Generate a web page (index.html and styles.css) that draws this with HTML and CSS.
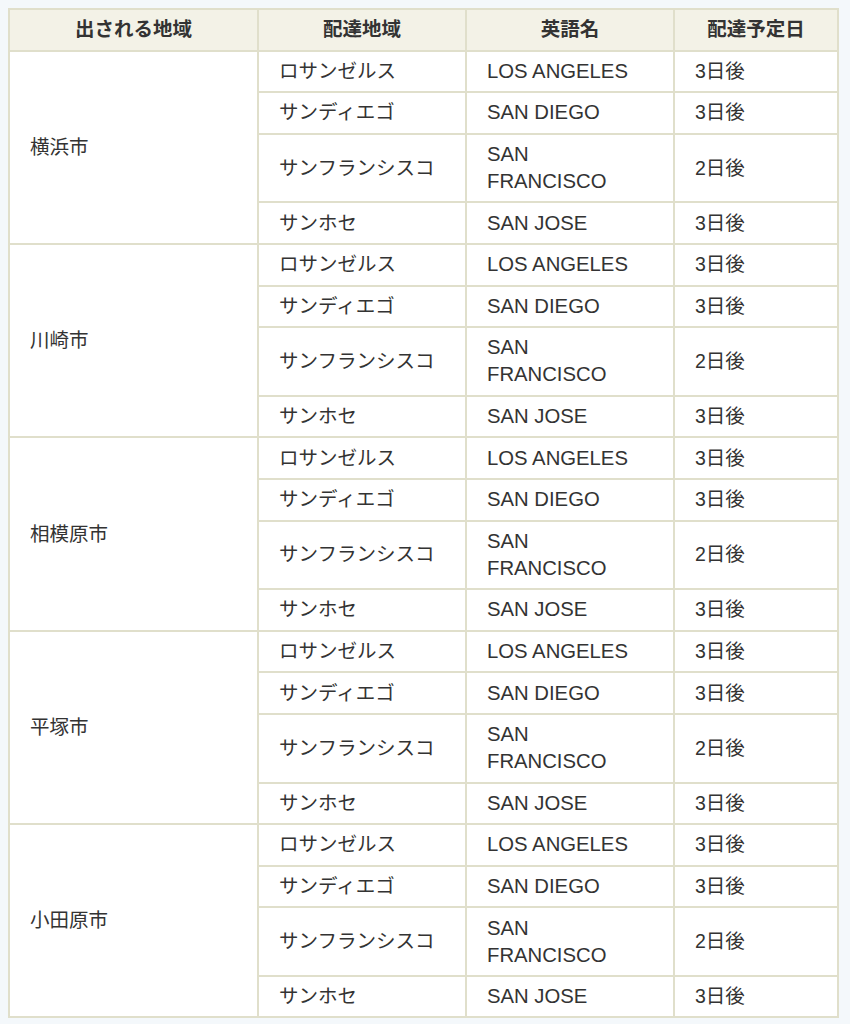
FILE: index.html
```html
<!DOCTYPE html>
<html lang="ja">
<head>
<meta charset="utf-8">
<link rel="stylesheet" href="styles.css">
</head>
<body>
<table class="delivery">
  <thead>
    <tr><th class="c1">出される地域</th><th class="c2">配達地域</th><th class="c3">英語名</th><th class="c4">配達予定日</th></tr>
  </thead>
  <tbody>
    <tr><td rowspan="4">横浜市</td><td>ロサンゼルス</td><td class="en">LOS ANGELES</td><td>3日後</td></tr>
    <tr><td>サンディエゴ</td><td class="en">SAN DIEGO</td><td>3日後</td></tr>
    <tr><td>サンフランシスコ</td><td class="en">SAN<br>FRANCISCO</td><td>2日後</td></tr>
    <tr><td>サンホセ</td><td class="en">SAN JOSE</td><td>3日後</td></tr>

    <tr><td rowspan="4">川崎市</td><td>ロサンゼルス</td><td class="en">LOS ANGELES</td><td>3日後</td></tr>
    <tr><td>サンディエゴ</td><td class="en">SAN DIEGO</td><td>3日後</td></tr>
    <tr><td>サンフランシスコ</td><td class="en">SAN<br>FRANCISCO</td><td>2日後</td></tr>
    <tr><td>サンホセ</td><td class="en">SAN JOSE</td><td>3日後</td></tr>

    <tr><td rowspan="4">相模原市</td><td>ロサンゼルス</td><td class="en">LOS ANGELES</td><td>3日後</td></tr>
    <tr><td>サンディエゴ</td><td class="en">SAN DIEGO</td><td>3日後</td></tr>
    <tr><td>サンフランシスコ</td><td class="en">SAN<br>FRANCISCO</td><td>2日後</td></tr>
    <tr><td>サンホセ</td><td class="en">SAN JOSE</td><td>3日後</td></tr>

    <tr><td rowspan="4">平塚市</td><td>ロサンゼルス</td><td class="en">LOS ANGELES</td><td>3日後</td></tr>
    <tr><td>サンディエゴ</td><td class="en">SAN DIEGO</td><td>3日後</td></tr>
    <tr><td>サンフランシスコ</td><td class="en">SAN<br>FRANCISCO</td><td>2日後</td></tr>
    <tr><td>サンホセ</td><td class="en">SAN JOSE</td><td>3日後</td></tr>

    <tr><td rowspan="4">小田原市</td><td>ロサンゼルス</td><td class="en">LOS ANGELES</td><td>3日後</td></tr>
    <tr><td>サンディエゴ</td><td class="en">SAN DIEGO</td><td>3日後</td></tr>
    <tr><td>サンフランシスコ</td><td class="en">SAN<br>FRANCISCO</td><td>2日後</td></tr>
    <tr><td>サンホセ</td><td class="en">SAN JOSE</td><td>3日後</td></tr>
  </tbody>
</table>
</body>
</html>
```

FILE: styles.css
```css
html, body {
  margin: 0;
  padding: 0;
  background: #f4f8fb;
}
body {
  padding: 8px;
  font-family: "Liberation Sans", "Noto Sans CJK JP", sans-serif;
  font-size: 19.5px;
  line-height: 27px;
  color: #333;
}
.delivery {
  border-collapse: collapse;
  width: 831px;
  table-layout: fixed;
  background: #fff;
}
.delivery th,
.delivery td {
  border: 2px solid #e0dfcb;
  padding: 6.3px 20px;
  text-align: left;
  vertical-align: middle;
  font-weight: normal;
}
.delivery th {
  background: #f3f2e7;
  text-align: center;
  font-weight: bold;
  color: #333;
}
.delivery .en {
  font-size: 20.3px;
}
.c1 { width: 207px; }
.c2 { width: 166px; }
.c3 { width: 166px; }
.c4 { width: 122px; }
```
